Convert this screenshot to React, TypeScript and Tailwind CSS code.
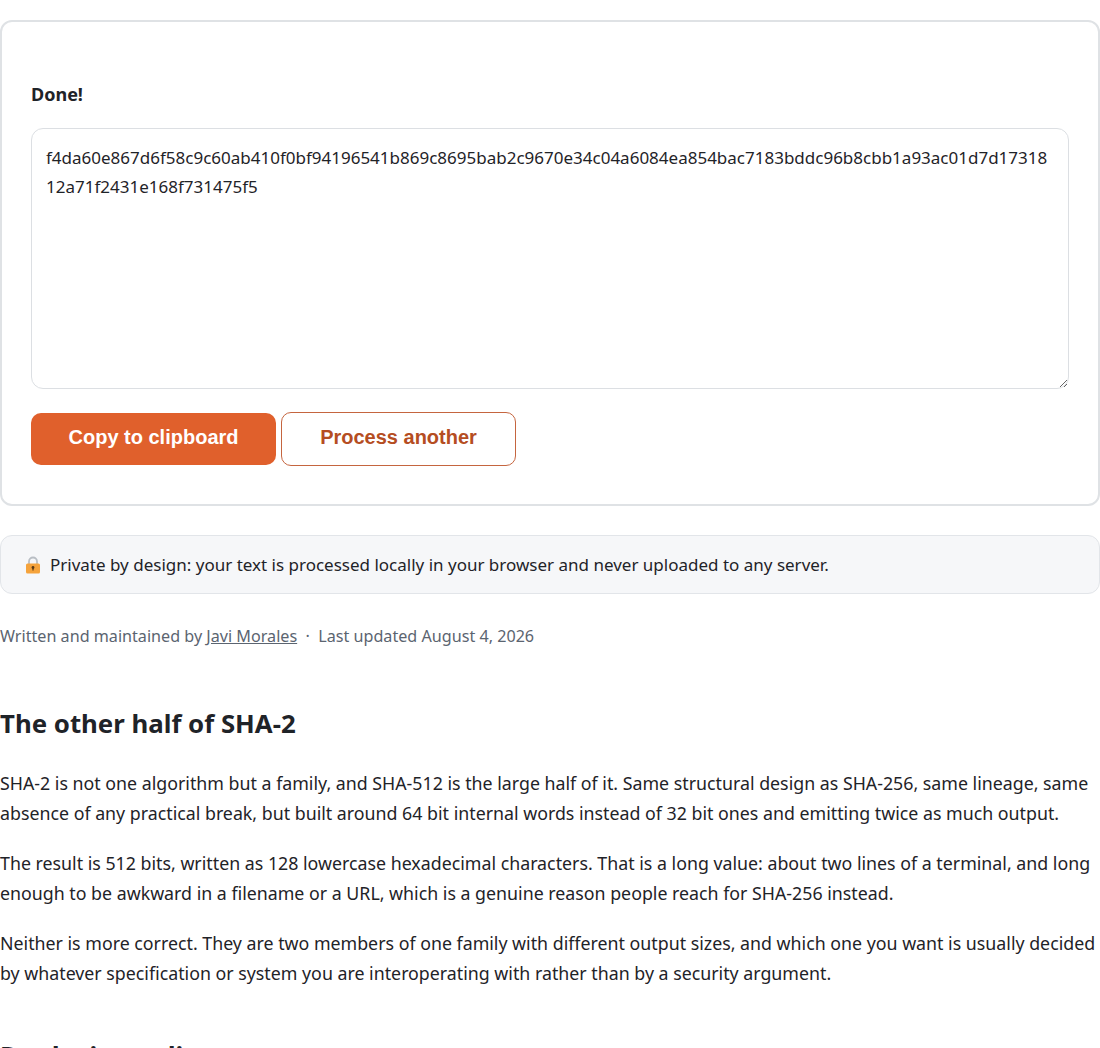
const hash =
  'f4da60e867d6f58c9c60ab410f0bf94196541b869c8695bab2c9670e34c04a6084ea854bac7183bddc96b8cbb1a93ac01d7d1731812a71f2431e168f731475f5';

function Lock() {
  return (
    <svg width="16" height="18" viewBox="0 0 16 18" className="shrink-0">
      <path d="M4 8V5.5a4 4 0 0 1 8 0V8" fill="none" stroke="#b9bec4" strokeWidth="1.8" />
      <rect x="1" y="7.5" width="14" height="10" rx="1.5" fill="#f5a33c" />
      <circle cx="8" cy="11.5" r="1.4" fill="#5b3a16" />
      <rect x="7.4" y="11.5" width="1.2" height="3" fill="#5b3a16" />
    </svg>
  );
}

export default function App() {
  return (
    <div className="h-[1048px] overflow-hidden bg-white pt-5 font-['Noto_Sans','Open_Sans',sans-serif] text-[#1f2328]">
      {/* Result card */}
      <div className="h-[486px] rounded-xl border-2 border-[#dfe2e5] px-[29px] pt-[60px]">
        <p className="text-[18px] leading-6 font-bold">Done!</p>
        <textarea
          readOnly
          value={hash}
          className="mt-[22px] block h-[261px] w-full resize-y rounded-xl border border-[#dcdfe3] px-[14px] pt-[15px] pb-[14px] text-[17px] leading-[28.6px] outline-none"
        />
        <div className="mt-[23px] flex items-center gap-[5px] font-['Liberation_Sans',sans-serif] text-[20px] font-bold">
          <button className="h-[52px] w-[245px] rounded-[10px] bg-[#e0602c] pb-1 text-white">Copy to clipboard</button>
          <button className="h-[54px] w-[235px] rounded-[10px] border border-[#c5653f] bg-white pb-1 text-[#b54d22]">Process another</button>
        </div>
      </div>

      {/* Privacy note */}
      <div className="mt-[29px] flex h-[59px] items-center gap-[9px] rounded-xl border border-[#e2e5e9] bg-[#f6f7f9] pl-6 text-[17px]">
        <Lock />
        <span>Private by design: your text is processed locally in your browser and never uploaded to any server.</span>
      </div>

      <p className="mt-[30px] text-[16.15px] leading-6 text-[#5b6470]">
        Written and maintained by <a className="underline">Javi Morales</a> &nbsp;·&nbsp; Last updated August 4, 2026
      </p>

      {/* Article */}
      <h2 className="mt-[59px] text-[25.8px] leading-8 font-bold">The other half of SHA-2</h2>
      <p className="mt-[29px] text-[17.8px] leading-[30px]">
        SHA-2 is not one algorithm but a family, and SHA-512 is the large half of it. Same structural design as SHA-256, same lineage, same absence of any practical break, but built around 64 bit internal words instead of 32 bit ones and emitting twice as much output.
      </p>
      <p className="mt-[20px] text-[17.8px] leading-[30px]">
        The result is 512 bits, written as 128 lowercase hexadecimal characters. That is a long value: about two lines of a terminal, and long enough to be awkward in a filename or a URL, which is a genuine reason people reach for SHA-256 instead.
      </p>
      <p className="mt-[20px] text-[17.8px] leading-[30px]">
        Neither is more correct. They are two members of one family with different output sizes, and which one you want is usually decided by whatever specification or system you are interoperating with rather than by a security argument.
      </p>
      <h2 className="mt-[51px] text-[25.8px] leading-8 font-bold">Producing a digest</h2>
    </div>
  );
}
